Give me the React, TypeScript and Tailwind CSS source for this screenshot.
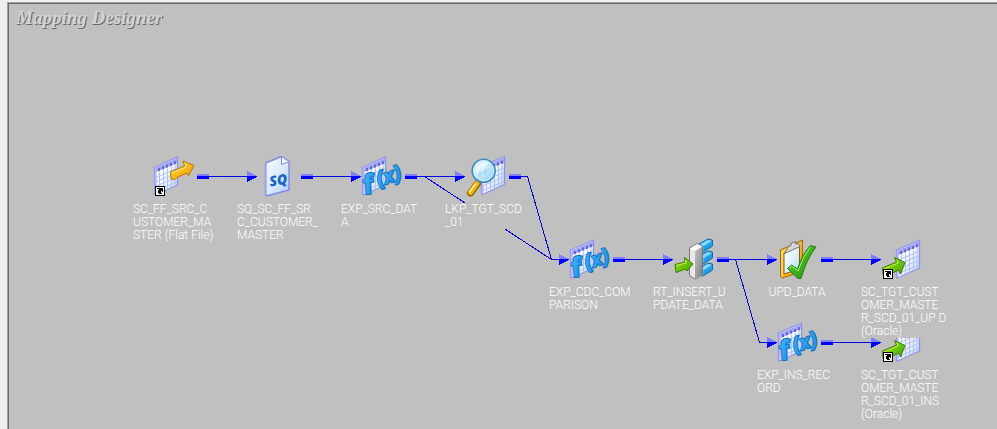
import type { ReactElement } from "react";

type IconName = "source" | "qualifier" | "expression" | "lookup" | "router" | "update" | "target";

interface MappingNode {
  id: string;
  icon: IconName;
  column: number;
  row: number;
  lines: string[];
}

const COLUMN_START = 124;
const COLUMN_PITCH = 104;
const ROW_START = 150;
const ROW_PITCH = 83;

// Later nodes are painted over earlier ones, so the lowest row comes first.
const nodes: MappingNode[] = [
  { id: "exp-ins", icon: "expression", column: 6, row: 2, lines: ["EXP_INS_REC", "ORD"] },
  { id: "tgt-ins", icon: "target", column: 7, row: 2, lines: ["SC_TGT_CUST", "OMER_MASTE", "R_SCD_01_INS", "(Oracle)"] },
  { id: "exp-cdc", icon: "expression", column: 4, row: 1, lines: ["EXP_CDC_COM", "PARISON"] },
  { id: "router", icon: "router", column: 5, row: 1, lines: ["RT_INSERT_U", "PDATE_DATA"] },
  { id: "upd", icon: "update", column: 6, row: 1, lines: ["UPD_DATA"] },
  { id: "tgt-upd", icon: "target", column: 7, row: 1, lines: ["SC_TGT_CUST", "OMER_MASTE", "R_SCD_01_UP D", "(Oracle)"] },
  { id: "source", icon: "source", column: 0, row: 0, lines: ["SC_FF_SRC_C", "USTOMER_MA", "STER (Flat File)"] },
  { id: "sq", icon: "qualifier", column: 1, row: 0, lines: ["SQ_SC_FF_SR", "C_CUSTOMER_", "MASTER"] },
  { id: "exp-src", icon: "expression", column: 2, row: 0, lines: ["EXP_SRC_DAT", "A"] },
  { id: "lookup", icon: "lookup", column: 3, row: 0, lines: ["LKP_TGT_SCD", "_01"] },
];

function Grid({ x, y }: { x: number; y: number }) {
  return (
    <g transform={`translate(${x} ${y})`}>
      <path d="M0 10 L23 0 V28 L1 38 L0 37Z" fill="url(#sheet)" stroke="#8f91ee" strokeWidth="1.3" strokeLinejoin="round" />
      <path d="M1 10.500L22.500 1V6L1 15.500Z" fill="#a3a6f8" />
      <path d="M4.500 11v3 M8.500 9.300v3 M12.500 7.600v3 M16.500 5.900v3 M20.500 4.200v3" stroke="#6468c8" strokeWidth="2" />
      <path
        d="M1 20.5L22 11.5 M1 25L22 16 M1 29.5L22 20.5 M1 34L22 25 M5 15V35 M9 13.3V33.5 M13 11.6V31.7 M17 9.9V30 M20.5 8.4V28.5"
        stroke="#b3c0f6"
        strokeWidth="1"
      />
      <path d="M1.2 11V36.5" stroke="#b4b7ff" strokeWidth="2" />
    </g>
  );
}

function Shortcut() {
  return (
    <g>
      <rect x="6" y="32" width="10" height="10" fill="#000" />
      <rect x="7" y="33" width="8" height="8" fill="#fff" />
      <path d="M8 34h6v4h-1v-1h-1v2h1v1h-3v-1h-1v-3h1v-1h-2z" fill="#000" />
    </g>
  );
}

function SourceIcon() {
  return (
    <>
      <Grid x={5.5} y={3} />
      <path d="M21.5 18 L35.5 12 L34 7 L45 11.5 L39.5 22 L38 19 L28 23.5 L26 25.5 L22 25Z" fill="url(#gold)" stroke="#b87800" strokeLinejoin="round" />
      <path d="M23 19L37 13L36 9" fill="none" stroke="#ffe980" />
      <Shortcut />
    </>
  );
}

function TargetIcon() {
  return (
    <>
      <Grid x={19.5} y={3} />
      <path d="M5.5 31 L19.5 25 L17.5 20.5 L28 25.5 L23.5 37 L21.5 33 L9 39.5 L6 38Z" fill="url(#green)" stroke="#3d7d00" strokeLinejoin="round" />
      <path d="M7 32L21 26L20 23" fill="none" stroke="#c4f04c" />
      <Shortcut />
    </>
  );
}

function QualifierIcon() {
  return (
    <>
      <path d="M12.5 9 L28.5 2.5 L36 7.5 V36 L15 41.5 L12.5 41Z" fill="url(#page)" stroke="#8688e4" strokeWidth="1.4" strokeLinejoin="round" />
      <path d="M13.4 10V40.5" stroke="#bcc0ff" strokeWidth="1.6" />
      <path d="M28.5 3V10.5L35.5 8" fill="#eef3ff" stroke="#8688e4" strokeLinejoin="round" />
      <text
        x="25"
        y="31"
        textAnchor="middle"
        transform="rotate(-10 25 25)"
        fill="#1565cc"
        className="font-['Open_Sans',sans-serif] text-[14px] font-extrabold italic"
      >
        SQ
      </text>
    </>
  );
}

function ExpressionIcon() {
  return (
    <>
      <Grid x={5.5} y={3} />
      <g
        fill="url(#blue)"
        stroke="#1470bd"
        strokeWidth="2"
        strokeLinejoin="round"
        paintOrder="stroke"
        className="font-['Open_Sans',sans-serif] font-bold"
      >
        <text x="12" y="40" textAnchor="middle" transform="rotate(-4 12 40)" className="text-[27px]">
          f
        </text>
        <g transform="rotate(-18 32 23)" className="italic">
          <text x="23" y="29" textAnchor="middle" className="text-[21px]">
            (
          </text>
          <text x="32" y="29" textAnchor="middle" className="text-[20px]">
            x
          </text>
          <text x="41" y="29" textAnchor="middle" className="text-[21px]">
            )
          </text>
        </g>
      </g>
    </>
  );
}

function LookupIcon() {
  return (
    <>
      <Grid x={20.5} y={2.5} />
      <path d="M16.5 29.5L9.5 39" stroke="#8a6000" strokeWidth="7" strokeLinecap="round" />
      <path d="M16 29.5L9.5 38.5" stroke="#f2b60f" strokeWidth="5" strokeLinecap="round" />
      <path d="M14.5 30L8.5 38" stroke="#fff08a" strokeWidth="1.5" strokeLinecap="round" />
      <circle cx="22.7" cy="16.7" r="11.5" fill="url(#lens)" stroke="#3b8abf" strokeWidth="1.6" />
      <circle cx="22.7" cy="16.7" r="10" fill="none" stroke="#c2ecfb" />
      <path d="M16 22L29 15 M16 17L28 11 M19 12V24 M24 10V22" stroke="#9bc9f0" opacity=".7" />
      <path d="M15 18C15 10 22 8 28 9C25 15 21 17 15 18Z" fill="#fff" opacity=".6" />
    </>
  );
}

function RouterIcon() {
  return (
    <>
      {[0, 12, 24].map((dy) => (
        <g key={dy} transform={`translate(0 ${dy})`}>
          <path d="M29 7.500L39 2L43.500 3V9L34 15L29 13.500Z" fill="#1a9eee" stroke="#0c6db3" strokeLinejoin="round" />
          <path d="M30 8L39 2.700L43 4L34 9.800Z" fill="#7fd6ff" />
          <path d="M34 10V14" stroke="#5cc4fb" />
        </g>
      ))}
      <path d="M20.5 11 L28 6.5 L33.5 9 V38 L26 42 L20.5 38.5Z" fill="#e8e8e8" stroke="#777" strokeLinejoin="round" />
      <path d="M26 14 L33 10 V37.7 L26 41.3Z" fill="url(#steel)" />
      <path d="M21 11.5L28 7.3L33 9.5L26 13.7Z" fill="#fff" />
      <path d="M6 27.5 L16 25 L15.5 20.500L24 27 L18 34 L16.5 32 L7 35.5Z" fill="url(#green)" stroke="#3d7d00" strokeLinejoin="round" />
      <path d="M7 28.5L17 26L16.5 23" fill="none" stroke="#c4f04c" />
    </>
  );
}

function UpdateIcon() {
  return (
    <>
      <path d="M7.5 13 L29.5 3 V34.5 L9 41 L7.5 39.5Z" fill="url(#gold)" stroke="#a96500" strokeLinejoin="round" />
      <path d="M9 14V39.5" stroke="#ffe27a" />
      <path d="M11 16 L26.5 9 V32 L11 37Z" fill="url(#paper)" stroke="#805b26" />
      <path d="M11.5 16.5 L15.5 9.5 L18 8.5 V6 L22.5 4.5 V7 L25.5 6.5 L27 9.5Z" fill="#d8d8dc" stroke="#76767c" strokeLinejoin="round" />
      <path d="M14.5 31.5 L18.5 28 L24.5 32 Q30 16 37.5 8.5 L43 10 Q34 21 28 41.5 L25 41.5Z" fill="url(#check)" stroke="#2b7a12" strokeLinejoin="round" />
      <path d="M16 31.5L18.8 29.3L25.3 34Q30 19 37.8 10" fill="none" stroke="#a8ee6a" />
    </>
  );
}

const icons: Record<IconName, () => ReactElement> = {
  source: SourceIcon,
  qualifier: QualifierIcon,
  expression: ExpressionIcon,
  lookup: LookupIcon,
  router: RouterIcon,
  update: UpdateIcon,
  target: TargetIcon,
};

const gradients: [string, string, string, string][] = [
  ["sheet", "#ffffff", "#eef6ff", "#b2d2fc"],
  ["page", "#f6fbff", "#dcecff", "#a9cdfc"],
  ["paper", "#ffffff", "#dff3fd", "#a5dbf5"],
  ["gold", "#ffe14a", "#f9b91c", "#e89400"],
  ["green", "#b4e82c", "#6cc808", "#3f9a00"],
  ["check", "#7ddc3c", "#39b51d", "#239014"],
  ["blue", "#5cc6ff", "#27a3f4", "#1583da"],
  ["lens", "#f2fcff", "#c5e9fb", "#8fd0f5"],
  ["steel", "#c2c2c2", "#a3a3a3", "#7d7d7d"],
];

function Gradients() {
  return (
    <defs>
      {gradients.map(([id, start, middle, end]) => (
        <linearGradient key={id} id={id} x1="0" y1="0" x2="1" y2="1">
          <stop offset="0" stopColor={start} />
          <stop offset=".5" stopColor={middle} />
          <stop offset="1" stopColor={end} />
        </linearGradient>
      ))}
    </defs>
  );
}

function Outlet({ column, row }: { column: number; row: number }) {
  const x = COLUMN_START + 64 + column * COLUMN_PITCH;
  const y = ROW_START + 22 + row * ROW_PITCH;
  return (
    <g>
      <rect x={x} y={y - 2} width="12" height="2" fill="#8080ff" />
      <rect x={x} y={y} width="12" height="3" fill="#0000ff" />
    </g>
  );
}

function ArrowHead({ column, row }: { column: number; row: number }) {
  const x = COLUMN_START + 10 + column * COLUMN_PITCH;
  const y = ROW_START + 22 + row * ROW_PITCH;
  return (
    <g>
      <path d={`M${x} ${y - 5}L${x + 10} ${y}H${x}Z`} fill="#8080ff" />
      <path d={`M${x} ${y}H${x + 10}V${y + 1}L${x} ${y + 6}Z`} fill="#0000ff" />
    </g>
  );
}

function Links() {
  return (
    <svg className="absolute top-0 left-0 overflow-visible" width="1" height="1" shapeRendering="crispEdges" aria-hidden="true">
      <Gradients />
      <g fill="none" stroke="#0000e0" strokeWidth="1">
        <path d="M188 172.500H238 M292 172.500H342 M396 172.500H446" />
        <path d="M415.500 172.500L542.500 255.500H550" />
        <path d="M500 172.500H518.500L542.500 255.500" />
        <path d="M604 255.500H654 M708 255.500H758 M812 255.500H862" />
        <path d="M726.500 255.500L750.500 338.500H758 M812 338.500H862" />
      </g>
      {[0, 1, 2, 3].map((column) => (
        <Outlet key={column} column={column} row={0} />
      ))}
      {[4, 5, 6].map((column) => (
        <Outlet key={column} column={column} row={1} />
      ))}
      <Outlet column={6} row={2} />
      {[1, 2, 3].map((column) => (
        <ArrowHead key={column} column={column} row={0} />
      ))}
      {[4, 5, 6, 7].map((column) => (
        <ArrowHead key={column} column={column} row={1} />
      ))}
      {[6, 7].map((column) => (
        <ArrowHead key={column} column={column} row={2} />
      ))}
    </svg>
  );
}

function NodeView({ node }: { node: MappingNode }) {
  const Icon = icons[node.icon];
  return (
    <li
      className="absolute flex w-20 flex-col items-center gap-[5px]"
      style={{ left: COLUMN_START + node.column * COLUMN_PITCH, top: ROW_START + node.row * ROW_PITCH }}
    >
      <svg className="overflow-visible" width="48" height="44" viewBox="0 0 48 44" fill="none" aria-hidden="true">
        <Icon />
      </svg>
      <div className={`bg-[#c0c0c0] whitespace-nowrap ${node.lines.length > 1 ? "w-full" : ""}`}>
        {node.lines.map((line) => (
          <div key={line}>{line}</div>
        ))}
      </div>
    </li>
  );
}

export default function App() {
  return (
    <main className="flex min-h-screen bg-[#f0f0f0] pt-[2px] pl-[7px]">
      <div className="flex grow border-t border-l border-[#a0a0a0]">
        <section className="relative grow overflow-hidden border-t border-l border-[#696969] bg-[#c0c0c0]">
          <h1 className="px-[7px] pt-1 font-['Liberation_Serif',serif] text-[19px] leading-5 font-bold text-[#d4d4d4] italic [text-shadow:1px_1px_0_#686868]">
            Mapping Designer
          </h1>
          <Links />
          <ul className="font-[Roboto,sans-serif] text-[12px] leading-[13px] font-[350] text-white">
            {nodes.map((node) => (
              <NodeView key={node.id} node={node} />
            ))}
          </ul>
        </section>
      </div>
    </main>
  );
}
